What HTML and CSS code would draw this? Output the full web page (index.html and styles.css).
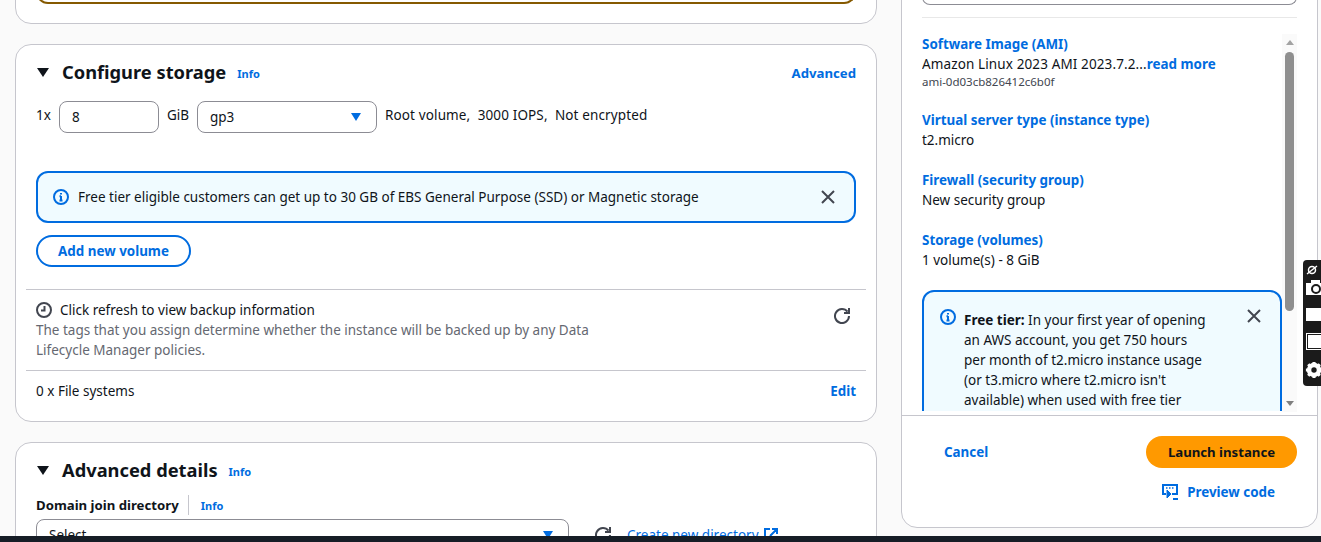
FILE: index.html
```html
<!DOCTYPE html>
<html lang="en">
<head>
  <meta charset="UTF-8">
  <title>Launch an instance</title>
  <link rel="stylesheet" href="styles.css">
</head>
<body>
  <div class="page">
    <main class="main">
      <section class="card card-prev">
        <div class="prev-box"></div>
      </section>

      <section class="card card-storage">
        <div class="card-head">
          <span class="caret"></span>
          <h2>Configure storage</h2>
          <a class="info">Info</a>
          <a class="link head-link">Advanced</a>
        </div>
        <div class="volume-row">
          <span>1x</span>
          <div class="field size-field">8</div>
          <span>GiB</span>
          <div class="field type-field">gp3<span class="select-arrow"></span></div>
          <span class="volume-note">Root volume,&nbsp; 3000 IOPS,&nbsp; Not encrypted</span>
        </div>
        <div class="alert">
          <svg class="alert-icon" width="16" height="16" viewBox="0 0 16 16" fill="none" stroke="#006ce0" stroke-width="2"><circle cx="8" cy="8" r="7"/><path d="M8 11.500V7M6.500 7.200H8M6.500 11.500h3"/><path d="M8 4v1.500"/></svg>
          <span class="alert-text">Free tier eligible customers can get up to 30 GB of EBS General Purpose (SSD) or Magnetic storage</span>
          <svg class="close" width="16" height="16" viewBox="0 0 16 16" fill="none" stroke="#424650" stroke-width="2"><path d="M2 2l12 12M14 2L2 14"/></svg>
        </div>
        <button class="btn-outline">Add new volume</button>
        <div class="backup">
          <div class="backup-text">
            <div class="backup-title">
              <svg width="16" height="16" viewBox="0 0 16 16" fill="none" stroke="#424650" stroke-width="2"><circle cx="8" cy="8" r="7"/><path d="M8.500 4v4.500H5"/></svg>
              Click refresh to view backup information
            </div>
            <p>The tags that you assign determine whether the instance will be backed up by any Data Lifecycle Manager policies.</p>
          </div>
          <svg class="refresh" width="16" height="16" viewBox="0 0 16 16" fill="none" stroke="#424650" stroke-width="2"><path d="M10 5h5V0"/><path d="M15 8a7 7 0 1 1-1.500-4.300"/></svg>
        </div>
        <div class="fs-row">
          <span>0 x File systems</span>
          <a class="link">Edit</a>
        </div>
      </section>

      <section class="card card-advanced">
        <div class="card-head">
          <span class="caret"></span>
          <h2>Advanced details</h2>
          <a class="info">Info</a>
        </div>
        <div class="label-row">
          <b>Domain join directory</b>
          <a class="info">Info</a>
        </div>
        <div class="directory-row">
          <div class="field directory-field">Select<span class="select-arrow"></span></div>
          <svg class="refresh" width="16" height="16" viewBox="0 0 16 16" fill="none" stroke="#424650" stroke-width="2"><path d="M10 5h5V0"/><path d="M15 8a7 7 0 1 1-1.500-4.300"/></svg>
          <a class="create-link">Create new directory
            <svg width="16" height="16" viewBox="0 0 16 16" fill="none" stroke="#006ce0" stroke-width="2"><path d="M7 2H2v12h12V9M9 2h5v5M14 2L7 9"/></svg>
          </a>
        </div>
      </section>
    </main>

    <aside class="summary">
      <div class="summary-top">
        <div class="count-box"></div>
      </div>
      <div class="summary-scroll">
        <div class="summary-items">
          <div class="item">
            <a class="link">Software Image (AMI)</a>
            <div class="ami-name">Amazon Linux 2023 AMI 2023.7.2...<a class="link">read more</a></div>
            <div class="ami-id">ami-0d03cb826412c6b0f</div>
          </div>
          <div class="item">
            <a class="link">Virtual server type (instance type)</a>
            <div>t2.micro</div>
          </div>
          <div class="item">
            <a class="link">Firewall (security group)</a>
            <div>New security group</div>
          </div>
          <div class="item">
            <a class="link">Storage (volumes)</a>
            <div>1 volume(s) - 8 GiB</div>
          </div>
          <div class="tier">
            <svg class="tier-icon" width="16" height="16" viewBox="0 0 16 16" fill="none" stroke="#006ce0" stroke-width="2"><circle cx="8" cy="8" r="7"/><path d="M8 11.500V7M6.500 7.200H8M6.500 11.500h3"/><path d="M8 4v1.500"/></svg>
            <p><b>Free tier:</b> In your first year of opening an AWS account, you get 750 hours per month of t2.micro instance usage (or t3.micro where t2.micro isn't available) when used with free tier AMIs.</p>
            <svg class="close" width="16" height="16" viewBox="0 0 16 16" fill="none" stroke="#424650" stroke-width="2"><path d="M2 2l12 12M14 2L2 14"/></svg>
          </div>
        </div>
        <div class="scrollbar">
          <span class="arrow-up"></span>
          <span class="thumb"></span>
          <span class="arrow-down"></span>
        </div>
      </div>
      <div class="summary-foot">
        <div class="foot-actions">
          <a class="link cancel">Cancel</a>
          <button class="btn-primary">Launch instance</button>
        </div>
        <a class="link preview">
          <svg width="16" height="16" viewBox="0 0 16 16" fill="none" stroke="#006ce0" stroke-width="2"><path d="M4 10H1V1h14v9h-5"/><path d="M5 6v8l4-4z" fill="#006ce0" stroke-width="1"/><path d="M11 15h5"/><path d="M4 4h1.500M7 4h1.500M10 4h1.500" stroke-width="1.500"/></svg>
          Preview code
        </a>
      </div>
    </aside>
  </div>

  <div class="widget">
    <svg class="widget-logo" width="12" height="12" viewBox="0 0 12 12" fill="none" stroke="#fff" stroke-width="1.500"><circle cx="6" cy="6" r="3.500"/><path d="M1 10L11 2"/></svg>
    <span class="widget-btn widget-camera"><i></i></span>
    <span class="widget-btn widget-full"></span>
    <span class="widget-btn widget-window"></span>
    <svg class="widget-gear" width="18" height="18" viewBox="0 0 20 20"><circle cx="10" cy="10" r="6" fill="none" stroke="#fff" stroke-width="4"/><path d="M10 1v18M1 10h18M3.600 3.600l12.800 12.800M16.400 3.600L3.600 16.400" stroke="#fff" stroke-width="3.500"/><circle cx="10" cy="10" r="3" fill="#1b1b1b"/></svg>
  </div>

  <div class="bottom-bar"></div>
</body>
</html>
```

FILE: styles.css
```css
* { box-sizing: border-box; }

html, body {
  margin: 0;
  height: 542px;
  overflow: hidden;
}

body {
  font-family: "Noto Sans", sans-serif;
  font-size: 13.500px;
  line-height: 20px;
  color: #0f141a;
  background: #fafafa;
  position: relative;
}

a { text-decoration: none; }

.page {
  display: flex;
  align-items: flex-start;
  gap: 24px;
  padding-left: 15px;
  height: 542px;
  overflow: hidden;
}

/* left column */
.main {
  width: 862px;
  flex: none;
  display: flex;
  flex-direction: column;
  gap: 20px;
  margin-top: -60px;
}

.card {
  background: #fff;
  border: 1px solid #c6c6cd;
  border-radius: 16px;
}

.card-prev {
  height: 84px;
  padding: 0 20px;
}

.prev-box {
  height: 63px;
  border: 2px solid #855900;
  border-top: none;
  border-radius: 0 0 12px 12px;
}

.card-storage {
  height: 378px;
  padding: 0 20px;
}

.card-head {
  display: flex;
  align-items: center;
  height: 28px;
  margin-top: 13px;
}

.card-head h2 {
  margin: 0 11px 0 13px;
  font-size: 18.300px;
  line-height: 28px;
  font-weight: 700;
}

.caret {
  width: 0;
  height: 0;
  margin-left: 1px;
  border-left: 6.500px solid transparent;
  border-right: 6.500px solid transparent;
  border-top: 9px solid #0f141a;
}

.info {
  color: #006ce0;
  font-size: 11px;
  font-weight: 700;
  line-height: 16px;
  padding-top: 3px;
}

.link {
  color: #006ce0;
  font-weight: 700;
  font-size: 13.400px;
}

.head-link {
  margin-left: auto;
  padding-top: 2px;
  line-height: 18px;
  font-size: 13.200px;
}

.volume-row {
  display: flex;
  align-items: flex-start;
  gap: 8px;
  margin-top: 15px;
  height: 32px;
}

.volume-row > span {
  padding-top: 4px;
}

.volume-note {
  letter-spacing: 0.130px;
}

.field {
  height: 32px;
  border: 1px solid #8c8c94;
  border-radius: 8px;
  background: #fff;
  padding: 5px 12px;
  position: relative;
}

.size-field { width: 100px; }
.type-field { width: 180px; }

.select-arrow {
  position: absolute;
  top: 11px;
  right: 15px;
  width: 0;
  height: 0;
  border-left: 5.500px solid transparent;
  border-right: 5.500px solid transparent;
  border-top: 8px solid #006ce0;
}

.alert {
  display: flex;
  align-items: center;
  height: 52px;
  margin-top: 38px;
  padding: 0 18px 0 15px;
  border: 2px solid #006ce0;
  border-radius: 12px;
  background: #f0fbff;
}

.alert-icon { flex: none; margin-right: 9px; }
.alert-text { flex: 1; }
.close { flex: none; }

.btn-outline {
  display: block;
  width: 155px;
  height: 32px;
  margin-top: 12px;
  border: 2px solid #006ce0;
  border-radius: 16px;
  background: #fff;
  color: #006ce0;
  font-family: inherit;
  font-size: 13.400px;
  font-weight: 700;
  padding: 0;
}

.backup {
  display: flex;
  justify-content: space-between;
  margin: 22px -10px 0;
  height: 81px;
  padding: 10px 16px 0 10px;
  border-top: 1px solid #c6c6cd;
}

.backup-text { width: 570px; }

.backup-title {
  display: flex;
  align-items: center;
  gap: 8px;
}

.backup-text p {
  margin: 0;
  color: #656871;
}

.refresh { flex: none; margin-top: 8px; }

.fs-row {
  display: flex;
  justify-content: space-between;
  margin: 0 -10px;
  padding: 10px 10px 0;
  border-top: 1px solid #c6c6cd;
}

.card-advanced {
  height: 200px;
  padding: 0 20px;
}

.label-row {
  display: flex;
  align-items: center;
  margin-top: 11px;
}

.label-row b {
  font-size: 13.200px;
  font-weight: 700;
  padding-right: 9px;
  margin-right: 12px;
  border-right: 1px solid #c6c6cd;
}

.label-row .info { padding-top: 1px; }

.directory-row {
  display: flex;
  align-items: flex-start;
  margin-top: 4px;
}

.directory-field { width: 533px; }

.directory-row .refresh {
  margin: 8px 0 0 26px;
}

.create-link {
  display: flex;
  align-items: center;
  gap: 4px;
  margin: 6px 0 0 16px;
  color: #006ce0;
  text-decoration: underline;
  height: 20px;
}

/* right column */
.summary {
  width: 417px;
  flex: none;
  height: 574px;
  margin-top: -46px;
  background: #fff;
  border: 1px solid #c6c6cd;
  border-radius: 16px;
  display: flex;
  flex-direction: column;
}

.summary-top {
  height: 63px;
  margin: 0 20px;
  border-bottom: 1px solid #e8e8e8;
}

.count-box {
  height: 50px;
  border: 1px solid #8c8c94;
  border-radius: 0 0 8px 8px;
  border-top: none;
}

.summary-scroll {
  display: flex;
  height: 378px;
  margin: 16px 20px 0;
  overflow: hidden;
  flex: none;
}

.summary-items {
  width: 360px;
  flex: none;
  overflow: hidden;
  height: 377px;
}

.item {
  margin-bottom: 20px;
}

.ami-name {
  letter-spacing: 0.120px;
}

.ami-name .link {
  letter-spacing: 0;
}

.ami-id {
  font-size: 11.500px;
  line-height: 16px;
  color: #424650;
}

.tier {
  display: flex;
  align-items: flex-start;
  margin-top: 20px;
  padding: 18px 26px 0 16px;
  border: 2px solid #006ce0;
  border-radius: 12px;
  background: #f0fbff;
  height: 240px;
}

.tier-icon { flex: none; margin: -1px 8px 0 0; }

.tier p {
  margin: 0;
  width: 244px;
  flex: none;
}

.tier b { font-weight: 700; }

.tier .close { margin: -2px 0 0 38px; }

.scrollbar {
  width: 15px;
  background: #fafafa;
  display: flex;
  flex-direction: column;
  align-items: center;
  position: relative;
  height: 378px;
}

.arrow-up, .arrow-down {
  position: absolute;
  width: 0;
  height: 0;
  border-left: 4.500px solid transparent;
  border-right: 4.500px solid transparent;
}

.arrow-up {
  top: 6px;
  border-bottom: 5px solid #a3a3a3;
}

.arrow-down {
  bottom: 6px;
  border-top: 5px solid #7f7f7f;
}

.thumb {
  position: absolute;
  top: 18px;
  width: 9px;
  height: 259px;
  border-radius: 5px;
  background: #8f8f8f;
}

.summary-foot {
  flex: 1;
  margin-top: 3px;
  border-top: 1px solid #c6c6cd;
  padding: 20px 20px 0;
}

.foot-actions {
  display: flex;
  justify-content: space-between;
  align-items: center;
}

.cancel { margin-left: 22px; }

.btn-primary {
  width: 151px;
  height: 32px;
  border: none;
  border-radius: 16px;
  background: #ff9900;
  color: #0f141a;
  font-family: inherit;
  font-size: 13.200px;
  font-weight: 700;
  padding: 0;
}

.preview {
  display: flex;
  align-items: center;
  justify-content: flex-end;
  gap: 9px;
  margin-top: 14px;
  padding-right: 22px;
}

/* floating recorder widget on the page edge */
.widget {
  position: absolute;
  top: 260px;
  right: 0;
  width: 18px;
  height: 126px;
  background: #1b1b1b;
  border-radius: 4px 0 0 4px;
  overflow: hidden;
}

.widget-logo {
  position: absolute;
  top: 4px;
  left: 3px;
}

.widget-btn {
  position: absolute;
  left: 3px;
  width: 20px;
  background: #fff;
}

.widget-camera {
  top: 23px;
  height: 12px;
}

.widget-camera::before {
  content: "";
  position: absolute;
  top: -3px;
  left: 5px;
  width: 9px;
  height: 3px;
  background: #fff;
}

.widget-camera i {
  position: absolute;
  top: 1px;
  left: 5px;
  width: 10px;
  height: 10px;
  border: 2px solid #1b1b1b;
  border-radius: 50%;
}

.widget-full {
  top: 48px;
  height: 13px;
}

.widget-window {
  top: 73px;
  height: 17px;
  background: #fff;
  border: 1px solid #fff;
  outline: 1px solid #1b1b1b;
  outline-offset: -2px;
}

.widget-gear {
  position: absolute;
  top: 101px;
  left: 2px;
}

.bottom-bar {
  position: absolute;
  left: 0;
  right: 0;
  bottom: 0;
  height: 6px;
  background: #161d26;
}
```
